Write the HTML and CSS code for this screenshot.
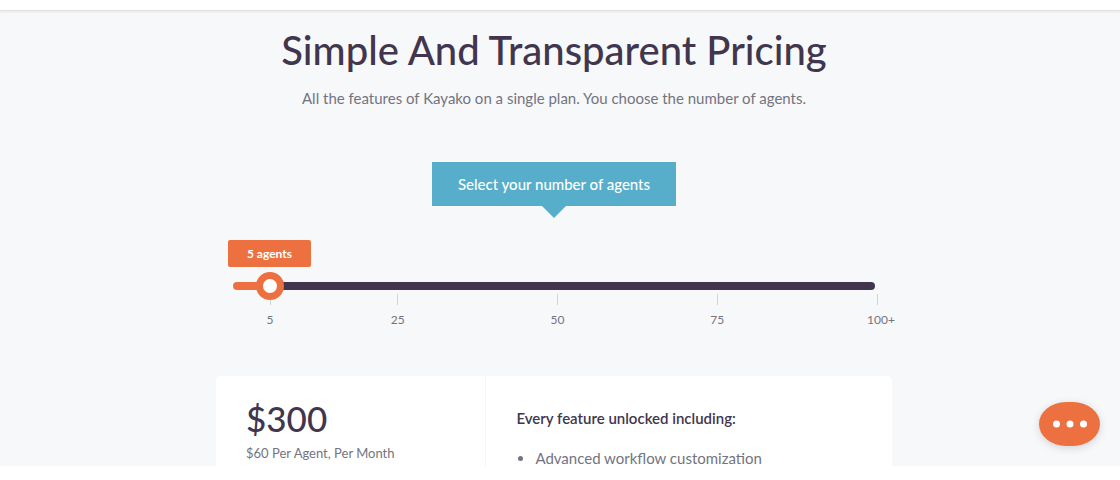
FILE: index.html
```html
<!DOCTYPE html>
<html lang="en">
<head>
    <meta charset="UTF-8">
    <meta name="viewport" content="width=device-width, initial-scale=1.0">
    <title>Simple And Transparent Pricing</title>
    <link rel="stylesheet" href="styles.css">
</head>
<body>
    <main class="pricing">
        <div class="container">
            <h1>Simple And Transparent Pricing</h1>
            <p class="subtitle">All the features of Kayako on a single plan. You choose the number of agents.</p>

            <label class="callout" for="agents">Select your number of agents</label>

            <div class="slider">
                <output class="slider-value" for="agents">5 agents</output>
                <input type="range" id="agents" name="agents" min="1" max="107" value="5">
                <ul class="ticks">
                    <li>5</li>
                    <li>25</li>
                    <li>50</li>
                    <li>75</li>
                    <li><span>100<span class="plus">+</span></span></li>
                </ul>
            </div>

            <div class="card">
                <div class="price">
                    <div class="amount">$300</div>
                    <div class="per-agent">$60 Per Agent, Per Month</div>
                </div>
                <div class="features">
                    <h2>Every feature unlocked including:</h2>
                    <ul>
                        <li>Advanced workflow customization</li>
                    </ul>
                </div>
            </div>
        </div>
    </main>

    <button class="chat" type="button" aria-label="Open chat">
        <svg width="36" height="8" viewBox="0 0 36 8" fill="#fff">
            <circle cx="4.5" cy="4" r="3.5"/>
            <circle cx="18" cy="4" r="3.5"/>
            <circle cx="31.5" cy="4" r="3.5"/>
        </svg>
    </button>
</body>
</html>
```
FILE: styles.css
```css
* {
    box-sizing: border-box;
}
body {
    margin: 0;
    padding-top: 10px;
    background: #fff;
    color: #737480;
    font-family: Lato, "Open Sans", sans-serif;
    font-size: 16px;
}
.pricing {
    padding: 11px 24px 0 12px;
    background: #f7f8fa;
    border-top: 1px solid #dfe0e1;
    box-shadow: inset 0 2px 1px #eeeff1;
}
.container {
    max-width: 676px;
    margin: 0 auto;
    text-align: center;
}
h1 {
    margin: 0;
    color: #41364e;
    font-size: 40px;
    font-weight: 500;
    line-height: 56px;
}
.subtitle {
    margin: 8px 0 52px;
    font-size: 15px;
    line-height: 24px;
}
.callout {
    position: relative;
    display: inline-block;
    padding: 0 26px;
    background: #56aecb;
    color: #fff;
    font-size: 15px;
    font-weight: 500;
    line-height: 44px;
}
.callout::after {
    content: "";
    position: absolute;
    top: 100%;
    left: 50%;
    margin-left: -12px;
    border: 12px solid transparent;
    border-top-color: #56aecb;
    border-bottom: 0;
}

/* slider */
.slider {
    margin: 34px 17px 0;
    text-align: left;
}
.slider-value {
    display: block;
    width: 83px;
    margin-left: -5px;
    background: #ed7140;
    border-radius: 2px;
    color: #fff;
    font-size: 12px;
    font-weight: 700;
    line-height: 27px;
    text-align: center;
}
input[type="range"] {
    -webkit-appearance: none;
    appearance: none;
    position: relative;
    z-index: 1;
    display: block;
    width: 100%;
    height: 28px;
    margin: 5px 0 0;
    background: none;
    cursor: pointer;
}
input[type="range"]::-webkit-slider-runnable-track {
    height: 8px;
    border-radius: 4px;
    background: linear-gradient(to right, #ed7140 6%, #41364e 6%);
}
input[type="range"]::-webkit-slider-thumb {
    -webkit-appearance: none;
    width: 28px;
    height: 28px;
    margin-top: -10px;
    border: 7px solid #ed7140;
    border-radius: 50%;
    background: #fff;
}
.ticks {
    display: grid;
    grid-template-columns: 20fr 25fr 25fr 25fr 0;
    margin: -6px -2px 0 37px;
    padding: 0;
    list-style: none;
    font-size: 12px;
    line-height: 16px;
}
.ticks li {
    display: flex;
    flex-direction: column;
    align-items: center;
    width: 0;
}
.ticks li::before {
    content: "";
    width: 1px;
    height: 11px;
    margin-bottom: 7px;
    background: #cfd3d8;
}
.plus {
    margin-right: -8px;
}

/* plan card */
.card {
    display: grid;
    grid-template-columns: 2fr 3fr;
    margin-top: 48px;
    background: #fff;
    border-radius: 5px 5px 0 0;
    text-align: left;
}
.price {
    padding: 20px 30px 0;
    border-right: 1px solid #f4f5f7;
}
.amount {
    color: #41364e;
    font-size: 35px;
    font-weight: 500;
    line-height: 44px;
}
.per-agent {
    font-size: 13px;
    line-height: 26px;
}
.features {
    padding: 31px 30px 0;
}
.features h2 {
    margin: 0 0 21px;
    color: #41364e;
    font-size: 15px;
    font-weight: 600;
    line-height: 22px;
}
.features ul {
    margin: 0;
    padding-left: 19px;
    font-size: 15px;
    line-height: 16px;
}

.chat {
    position: fixed;
    right: 20px;
    bottom: 34px;
    display: flex;
    align-items: center;
    justify-content: center;
    width: 61px;
    height: 44px;
    padding: 0;
    border: none;
    border-radius: 27px / 22px;
    background: #ed7140;
    box-shadow: 0 2px 8px rgba(0, 0, 0, 0.15);
    cursor: pointer;
}
```
